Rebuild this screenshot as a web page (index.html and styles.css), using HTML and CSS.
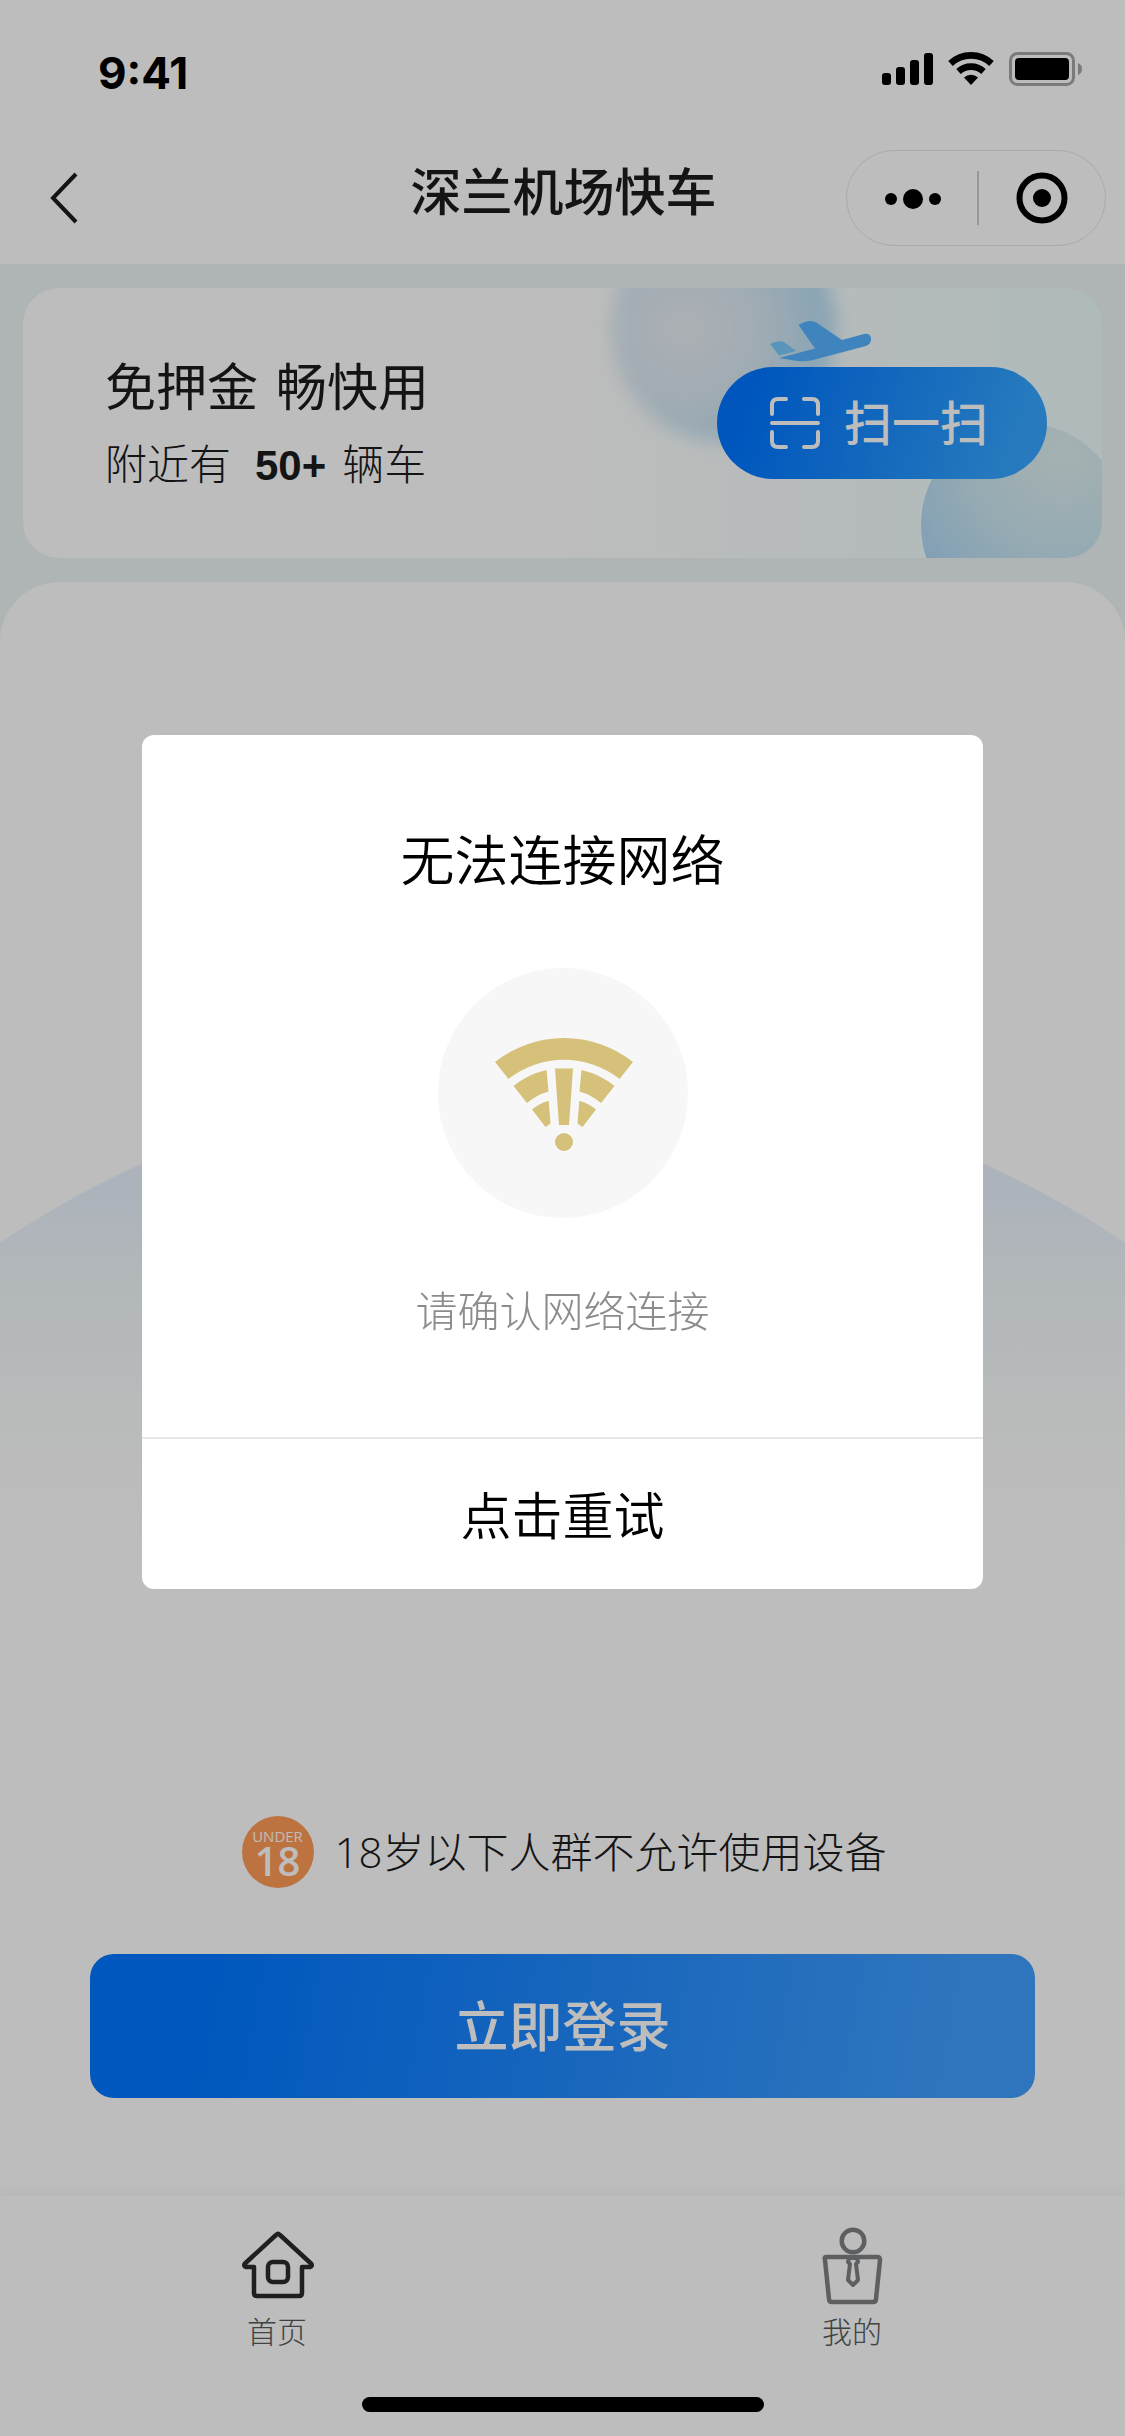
FILE: index.html
```html
<!DOCTYPE html>
<html lang="zh-CN">
<head>
<meta charset="utf-8">
<meta name="viewport" content="width=device-width, initial-scale=1">
<title>深兰机场快车</title>
<link rel="stylesheet" href="styles.css">
</head>
<body>
<div class="app">
  <header class="header">
    <div class="status">
      <span class="status-time">9:41</span>
      <svg class="status-icons" viewBox="0 0 202 36" aria-hidden="true">
        <rect x="0" y="22" width="9" height="12" rx="3"/>
        <rect x="14" y="16" width="9" height="18" rx="3"/>
        <rect x="28" y="9" width="9" height="25" rx="3"/>
        <rect x="42" y="2" width="9" height="32" rx="3"/>
        <g fill="none" stroke="#000" stroke-width="6.6">
          <path d="M68.500 12.500A30 30 0 0 1 109.500 12.500"/>
          <path d="M76.500 20.500A18.500 18.500 0 0 1 101.500 20.500"/>
        </g>
        <path d="M82 26.500a10.500 10.500 0 0 1 14 0L89 34z"/>
        <rect x="128.500" y="2.500" width="63" height="31" rx="7" fill="none" stroke="#a7a7a7" stroke-width="3"/>
        <rect x="133" y="7" width="54" height="22" rx="4"/>
        <path d="M196 12a6.500 6.500 0 0 1 0 12z" fill="#a7a7a7"/>
      </svg>
    </div>
    <nav class="nav">
      <button class="icon-button back" type="button" aria-label="返回">
        <svg width="30" height="54" viewBox="0 0 30 54"><path d="M27 3L4 27l23 24" fill="none" stroke="#1b1b1b" stroke-width="4"/></svg>
      </button>
      <h1 class="title">深兰机场快车</h1>
      <div class="capsule">
        <button class="icon-button" type="button" aria-label="更多">
          <svg width="56" height="24" viewBox="0 0 56 24"><circle cx="6" cy="13" r="6"/><circle cx="28" cy="13" r="10"/><circle cx="50" cy="13" r="6"/></svg>
        </button>
        <span class="capsule-line"></span>
        <button class="icon-button" type="button" aria-label="关闭">
          <svg width="52" height="52" viewBox="0 0 52 52"><circle cx="26" cy="26" r="22.500" fill="none" stroke="#000" stroke-width="6"/><circle cx="26" cy="26" r="9"/></svg>
        </button>
      </div>
    </nav>
  </header>

  <section class="promo">
    <span class="bubble bubble-soft"></span>
    <span class="bubble bubble-clear"></span>
    <svg class="plane" viewBox="0 0 102 42" aria-hidden="true">
      <path d="M28.500 5Q35 1 41 1Q44 1 47 3L72 20L94 14Q100 13 101 18Q102 23 96 26L43 40Q35 42 27 41L9 38L45 28.500z" fill="#57b3ff"/>
      <path d="M0 24Q8 20 14 22L26 31L9 35.500z" fill="#79c8fb"/>
    </svg>
    <div class="promo-text">
      <h2 class="promo-title"><span>免押金</span><span>畅快用</span></h2>
      <p class="promo-note"><span>附近有</span><strong>50+</strong><span>辆车</span></p>
    </div>
    <button class="scan" type="button">
      <svg width="50" height="52" viewBox="0 0 50 52" fill="none" stroke="#fff" stroke-width="4" stroke-linecap="round">
        <path d="M2 17V8q0-6 6-6h8M34 2h8q6 0 6 6v9M2 35v9q0 6 6 6h8M34 50h8q6 0 6-6v-9M2 26h46"/>
      </svg>
      <span class="scan-label">扫一扫</span>
    </button>
  </section>

  <main class="panel">
    <p class="age">
      <span class="age-badge"><span class="age-under">UNDER</span><span class="age-number">18</span></span>
      <span>18岁以下人群不允许使用设备</span>
    </p>
    <button class="login" type="button">立即登录</button>
  </main>

  <footer class="tabbar">
    <nav class="tabs">
      <a class="tab" href="#home">
        <svg width="78" height="80" viewBox="0 0 78 80" fill="none" stroke="#282a2c" stroke-width="4.500" stroke-linejoin="round">
          <path d="M16 41H8q-3-1-1-3.500L38 9q2-2 4 0L73 37.500q2 2.500-1 3.500h-8v26q0 3-3 3H19q-3 0-3-3z"/>
          <rect x="30" y="36" width="20" height="20" rx="5"/>
        </svg>
        <span>首页</span>
      </a>
      <a class="tab" href="#mine">
        <svg width="78" height="80" viewBox="0 0 78 80" fill="none" stroke="#7f8183" stroke-width="4.500" stroke-linejoin="round">
          <circle cx="40" cy="15" r="11.300"/>
          <path d="M13 31h51q3 0 3 3l-4 39q0 3-3 3H19q-3 0-3-3l-4-39q-1-3 1-3z"/>
          <path d="M36 32h8l1 4-2 2 2 16-5 5-5-5 2-16-2-2z" stroke-width="4"/>
        </svg>
        <span>我的</span>
      </a>
    </nav>
    <span class="home-indicator"></span>
  </footer>
</div>

<div class="scrim">
  <div class="dialog" role="alertdialog" aria-labelledby="dialog-title" aria-describedby="dialog-note">
    <h2 class="dialog-title" id="dialog-title">无法连接网络</h2>
    <svg class="dialog-icon" viewBox="0 0 250 250" aria-hidden="true">
      <circle cx="125" cy="125" r="125" fill="#f7f7f7"/>
      <g fill="#d6c17a">
        <path d="M57 94A111 111 0 0 1 195 94L181.500 111A90 90 0 0 0 70.500 111z"/>
        <path d="M75.500 118A81 81 0 0 1 108.500 102L110.500 123.500A59 59 0 0 0 89 135z"/>
        <path d="M176.500 118A81 81 0 0 0 143.500 102L141.500 123.500A59 59 0 0 1 163 135z"/>
        <path d="M94 141.500A51 51 0 0 1 110.700 132.800L112.500 155.500L107.500 159z"/>
        <path d="M158 141.500A51 51 0 0 0 141.300 132.800L139.500 155.500L144.500 159z"/>
        <path d="M117 100.500h18L131 157h-10z"/>
        <circle cx="126" cy="174" r="9"/>
      </g>
    </svg>
    <p class="dialog-note" id="dialog-note">请确认网络连接</p>
    <button class="retry" type="button">点击重试</button>
  </div>
</div>
</body>
</html>
```

FILE: styles.css
```css
* {
  box-sizing: border-box;
}

body {
  margin: 0;
  font-family: "Noto Sans CJK SC", sans-serif;
  font-weight: 300;
  color: #1b1b1b;
}

h1, h2, p {
  margin: 0;
}

button {
  border: 0;
  padding: 0;
  background: none;
  font: inherit;
  color: inherit;
}

svg {
  display: block;
  flex: none;
}

.app {
  display: flex;
  flex-direction: column;
  min-height: 100vh;
  background: #edf3f3;
}

/* Header */
.header {
  height: 264px;
  background: #fff;
}

.status {
  display: flex;
  justify-content: space-between;
  align-items: center;
  height: 132px;
  padding: 14px 41px 0 98px;
}

.status-time {
  font: 700 44px/60px Inter, sans-serif;
  color: #000;
}

.status-icons {
  width: 202px;
  height: 36px;
  margin-bottom: 8px;
}

.nav {
  display: grid;
  grid-template-columns: 260px 1fr 260px;
  align-items: center;
  height: 132px;
  padding: 0 19px;
}

.icon-button {
  display: flex;
  align-items: center;
  justify-content: center;
}

.back {
  justify-self: start;
  padding: 0 30px;
}

.title {
  padding: 0 0 18px 2px;
  font-size: 51px;
  line-height: 72px;
  font-weight: 500;
  text-align: center;
}

.capsule {
  display: flex;
  align-items: center;
  height: 96px;
  padding-left: 3px;
  border: 1px solid #e6e6e6;
  border-radius: 48px;
}

.capsule .icon-button {
  flex: 1;
}

.capsule-line {
  width: 2px;
  height: 54px;
  background: #cdcdcd;
}

/* Promo card */
.promo {
  position: relative;
  display: flex;
  justify-content: space-between;
  align-items: center;
  height: 270px;
  margin: 24px 23px;
  padding: 0 55px 0 82px;
  border-radius: 36px;
  overflow: hidden;
  background: linear-gradient(90deg, #fff 50%, #f8fdfd 70%, #ecfbfb 100%);
}

.bubble {
  position: absolute;
  border-radius: 50%;
}

.bubble-soft {
  right: 266px;
  top: -74px;
  width: 224px;
  height: 228px;
  background: radial-gradient(circle at 32% 50%, #ebeff4 0, #d8e8f2 40%, #acdaf4 90%);
  filter: blur(9px);
}

.bubble-clear {
  right: -23px;
  bottom: -69px;
  width: 204px;
  height: 204px;
  background: radial-gradient(circle at 70% 15%, #e0f0f0 0, #c9e6f2 45%, #a8d4f6 85%);
}

.plane {
  position: absolute;
  right: 230px;
  top: 32px;
  width: 102px;
  height: 42px;
}

.promo-text {
  position: relative;
  padding-top: 4px;
}

.promo-title {
  display: flex;
  gap: 18px;
  font-size: 51px;
  line-height: 78px;
  font-weight: 400;
}

.promo-note {
  display: flex;
  align-items: baseline;
  font-size: 42px;
  line-height: 78px;
}

.promo-note strong {
  padding: 0 16px 0 24px;
  font-family: "Liberation Sans", sans-serif;
  font-weight: 700;
}

.scan {
  position: relative;
  display: flex;
  align-items: center;
  justify-content: center;
  gap: 24px;
  width: 330px;
  height: 112px;
  padding-right: 6px;
  border-radius: 56px;
  background: linear-gradient(110deg, #0075ff 12%, #34a5ff 88%);
  color: #fff;
  font-size: 48px;
  line-height: 72px;
  font-weight: 500;
}

.scan-label {
  padding-bottom: 6px;
}

/* Content panel */
.panel {
  position: relative;
  flex: 1;
  display: flex;
  flex-direction: column;
  justify-content: flex-end;
  padding: 0 90px 98px;
  border-radius: 60px 60px 0 0;
  overflow: hidden;
  background: #fff;
}

.panel::before {
  content: "";
  position: absolute;
  top: 490px;
  left: -40%;
  width: 180%;
  aspect-ratio: 1;
  border-radius: 50%;
  background: linear-gradient(#e6f1fc 0, #e9f2fc 6%, #f0f7fb 10%, #fbfdfc 18%, #fff 24%);
}

.age {
  position: relative;
  display: flex;
  align-items: center;
  justify-content: center;
  gap: 21px;
  margin-bottom: 66px;
  padding-left: 3px;
  font-family: "Open Sans", "Noto Sans CJK SC", sans-serif;
  font-size: 42px;
  line-height: 72px;
}

.age-badge {
  display: flex;
  flex-direction: column;
  align-items: center;
  width: 72px;
  height: 72px;
  padding-top: 12px;
  border-radius: 50%;
  background: #ff9b57;
  color: #fff;
}

.age-under {
  font-size: 15px;
  line-height: 16px;
  font-weight: 400;
}

.age-number {
  font-size: 40px;
  line-height: 34px;
  font-weight: 600;
}

.login {
  position: relative;
  height: 144px;
  padding-bottom: 6px;
  border-radius: 24px;
  background: linear-gradient(100deg, #0076ff 12%, #409eff 90%);
  color: #fff;
  font-size: 54px;
  font-weight: 500;
}

/* Tab bar */
.tabbar {
  position: relative;
  display: flex;
  flex-direction: column;
  align-items: center;
  justify-content: space-between;
  height: 240px;
  padding: 30px 0 24px;
  background: #fff;
  box-shadow: 0 -4px 12px rgba(0, 0, 0, 0.04);
}

.tabs {
  align-self: stretch;
  display: flex;
  justify-content: space-between;
  padding: 0 234px 0 238px;
}

.tab {
  display: flex;
  flex-direction: column;
  align-items: center;
  gap: 3px;
  color: #555b5b;
  font-size: 30px;
  line-height: 42px;
  text-decoration: none;
}

.home-indicator {
  width: 402px;
  height: 15px;
  border-radius: 8px;
  background: #000;
}

/* Dialog */
.scrim {
  position: fixed;
  inset: 0;
  display: flex;
  align-items: center;
  padding: 0 142px;
  background: rgba(0, 0, 0, 0.26);
}

.dialog {
  flex: 1;
  display: flex;
  flex-direction: column;
  align-items: center;
  margin-bottom: 112px;
  padding-top: 84px;
  border-radius: 12px;
  overflow: hidden;
  background: #fff;
  color: #000;
}

.dialog-title {
  font-size: 54px;
  line-height: 78px;
  font-weight: 350;
}

.dialog-icon {
  width: 250px;
  height: 250px;
  margin: 71px 0 55px;
}

.dialog-note {
  margin-bottom: 92px;
  font-size: 42px;
  line-height: 72px;
  color: #8c8c8c;
}

.retry {
  align-self: stretch;
  height: 152px;
  padding-bottom: 3px;
  border-top: 2px solid #e7e7e7;
  font-size: 51px;
  font-weight: 350;
}
```
